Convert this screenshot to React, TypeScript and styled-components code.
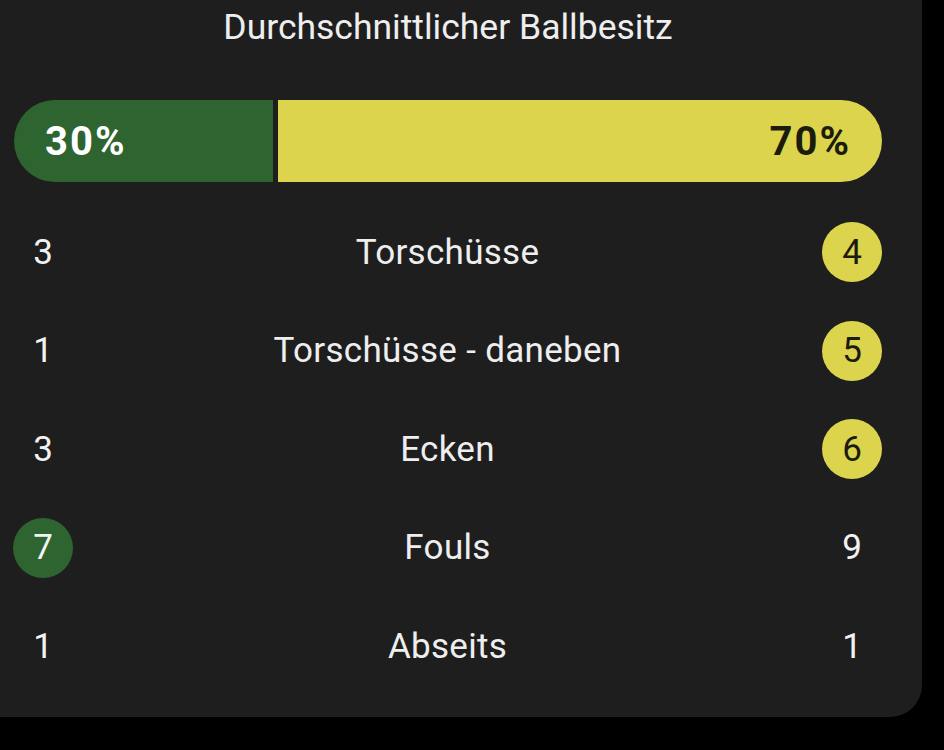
import React from "react";
import styled, { createGlobalStyle } from "styled-components";

type Side = "home" | "away" | "none";

interface StatRow {
  label: string;
  home: number;
  away: number;
}

const stats: StatRow[] = [
  { label: "Torschüsse", home: 3, away: 4 },
  { label: "Torschüsse - daneben", home: 1, away: 5 },
  { label: "Ecken", home: 3, away: 6 },
  { label: "Fouls", home: 7, away: 9 },
  { label: "Abseits", home: 1, away: 1 },
];

const possession = { home: 30, away: 70 };

const leader = (s: StatRow): Side => {
  // Fouls: fewer is better
  if (s.home === s.away) return "none";
  if (s.label === "Fouls") return s.home < s.away ? "home" : "away";
  return s.home > s.away ? "home" : "away";
};

const App: React.FC = () => {
  return (
    <>
      <GlobalStyle />
      <Page>
        <Card>
          <Title>Durchschnittlicher Ballbesitz</Title>

          {/* Possession bar */}
          <Bar>
            <Segment side="home" style={{ flexBasis: `${possession.home}%` }}>
              {possession.home}%
            </Segment>
            <Divider />
            <Segment side="away" style={{ flexBasis: `${possession.away}%` }}>
              {possession.away}%
            </Segment>
          </Bar>

          {/* Stats */}
          <Rows>
            {stats.map((s) => {
              const lead = leader(s);
              return (
                <Row key={s.label}>
                  <Value highlight={lead === "home" ? "home" : "none"}>{s.home}</Value>
                  <Label>{s.label}</Label>
                  <Value highlight={lead === "away" ? "away" : "none"}>{s.away}</Value>
                </Row>
              );
            })}
          </Rows>
        </Card>
      </Page>
    </>
  );
};

/* ================== STYLED COMPONENTS ================== */

const GREEN = "#2e6430";
const YELLOW = "#dcd44d";

const GlobalStyle = createGlobalStyle`
  html, body {
    margin: 0;
    padding: 0;
    background: #000;
  }
  body {
    font-family: Roboto, "Noto Sans", sans-serif;
    color: #f2f2f2;
  }
`;

const Page = styled.div`
  width: 944px;
  height: 750px;
  background: #000;
`;

const Card = styled.div`
  width: 922px;
  box-sizing: border-box;
  padding: 0 40px 21px 14px;
  background: #1e1e1e;
  border-radius: 0 0 32px 0;
`;

const Title = styled.div`
  height: 54px;
  line-height: 54px;
  text-align: center;
  font-size: 35.5px;
  color: #eeeeee;
`;

const Bar = styled.div`
  display: flex;
  height: 82px;
  margin-top: 46px;
  border-radius: 41px;
  overflow: hidden;
`;

const Segment = styled.div<{ side: "home" | "away" }>`
  display: flex;
  align-items: center;
  justify-content: ${({ side }) => (side === "home" ? "flex-start" : "flex-end")};
  padding: ${({ side }) => (side === "home" ? "0 0 0 31px" : "0 31px 0 0")};
  background: ${({ side }) => (side === "home" ? GREEN : YELLOW)};
  color: ${({ side }) => (side === "home" ? "#fff" : "#1c1c0c")};
  font-size: 40px;
  font-weight: 700;
  letter-spacing: 2px;
  box-sizing: border-box;
  flex-grow: 0;
  flex-shrink: 1;
`;

const Divider = styled.div`
  flex: 0 0 5px;
  background: #1e1e1e;
`;

const Rows = styled.div`
  display: flex;
  flex-direction: column;
  margin-top: 21px;
`;

const Row = styled.div`
  display: grid;
  grid-template-columns: 60px 1fr 60px;
  align-items: center;
  height: 98.5px;
  margin-left: -1px;
`;

const Label = styled.div`
  text-align: center;
  font-size: 35px;
  letter-spacing: 0.3px;
  color: #eeeeee;
`;

const Value = styled.div<{ highlight: Side }>`
  width: 60px;
  height: 60px;
  border-radius: 50%;
  display: flex;
  align-items: center;
  justify-content: center;
  font-size: 35px;
  background: ${({ highlight }) =>
    highlight === "home" ? GREEN : highlight === "away" ? YELLOW : "transparent"};
  color: ${({ highlight }) => (highlight === "away" ? "#1c1c0c" : "#f2f2f2")};
`;

export default App;
